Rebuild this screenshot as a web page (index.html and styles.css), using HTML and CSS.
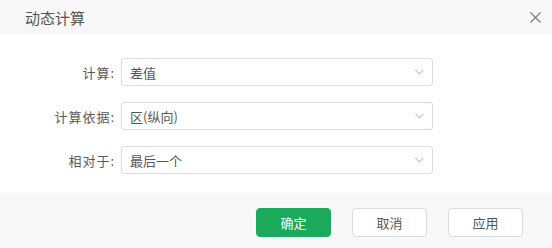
FILE: index.html
```html
<!DOCTYPE html>
<html lang="zh-CN">
<head>
<meta charset="utf-8">
<title>动态计算</title>
<link rel="stylesheet" href="styles.css">
</head>
<body>
<div class="dialog">
  <div class="header">
    <span class="title">动态计算</span>
    <svg class="close" width="11" height="11" viewBox="0 0 11 11"><path d="M0.5 0.5L10.5 10.5M10.5 0.5L0.5 10.5" stroke="#777" stroke-width="1.1" fill="none"/></svg>
  </div>
  <div class="content">
    <div class="row">
      <label class="label">计算:</label>
      <div class="select"><span>差值</span><svg class="chev" width="9" height="6" viewBox="0 0 9 6"><path d="M0.5 0.8L4.5 5L8.5 0.8" stroke="#aaa" stroke-width="1" fill="none"/></svg></div>
    </div>
    <div class="row">
      <label class="label">计算依据:</label>
      <div class="select"><span>区(纵向)</span><svg class="chev" width="9" height="6" viewBox="0 0 9 6"><path d="M0.5 0.8L4.5 5L8.5 0.8" stroke="#aaa" stroke-width="1" fill="none"/></svg></div>
    </div>
    <div class="row">
      <label class="label">相对于:</label>
      <div class="select"><span>最后一个</span><svg class="chev" width="9" height="6" viewBox="0 0 9 6"><path d="M0.5 0.8L4.5 5L8.5 0.8" stroke="#aaa" stroke-width="1" fill="none"/></svg></div>
    </div>
  </div>
  <div class="footer">
    <button class="btn primary">确定</button>
    <button class="btn">取消</button>
    <button class="btn">应用</button>
  </div>
</div>
</body>
</html>
```
FILE: styles.css
```css
* { box-sizing: border-box; }
html, body { margin: 0; padding: 0; background: #fff; }
body { font-family: "Noto Sans CJK SC", "Noto Sans", sans-serif; }
.dialog { width: 552px; height: 248px; display: flex; flex-direction: column; }
.header {
  height: 34px; background: #f8f8f8; display: flex; align-items: center;
  justify-content: space-between; padding: 0 11px 0 25px;
}
.title { font-size: 15px; color: #555; line-height: 1; }
.content { padding: 24px 0 19px; display: flex; flex-direction: column; gap: 16px; background: #fff; }
.row { display: flex; align-items: center; height: 28px; }
.label { width: 115px; text-align: right; font-size: 13px; letter-spacing: 1px; color: #5a5a5a; }
.select {
  margin-left: 6px; width: 312px; height: 28px; border: 1px solid #dcdcdc; border-radius: 3px;
  display: flex; align-items: center; justify-content: space-between; padding: 0 8px 0 8px;
  font-size: 13px; color: #555; background: #fff;
}
.chev { display: block; }
.footer {
  flex: 1; background: #f8f8f8; display: flex; justify-content: flex-end; align-items: flex-start;
  padding: 15px 29px 0 0; gap: 21px;
}
.btn {
  width: 75px; height: 29px; border: 1px solid #dcdcdc; border-radius: 4px; background: #fff;
  font-family: inherit; font-size: 13px; color: #555; padding: 0; cursor: pointer;
}
.btn.primary { background: #1ba95c; border-color: #1ba95c; color: #fff; }
```
